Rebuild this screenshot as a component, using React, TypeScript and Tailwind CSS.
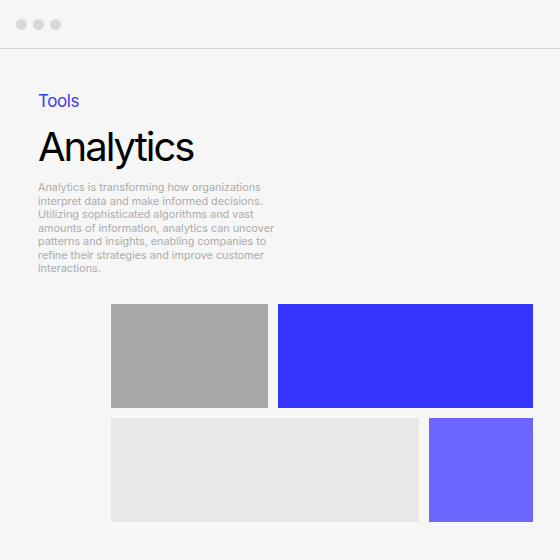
export default function App() {
  return (
    <div className="w-[560px] h-[560px] bg-[#f6f6f6] flex flex-col font-['Inter',sans-serif] overflow-hidden">
      {/* Window bar */}
      <div className="h-[49px] shrink-0 flex items-center gap-[6px] pl-4 border-b border-[#d6d6d6]">
        <span className="w-[11px] h-[11px] rounded-full bg-[#d9d9d9]" />
        <span className="w-[11px] h-[11px] rounded-full bg-[#d9d9d9]" />
        <span className="w-[11px] h-[11px] rounded-full bg-[#d9d9d9]" />
      </div>

      {/* Text */}
      <div className="pl-[38px] pt-[42px]">
        <p className="text-[17px] leading-[20px] tracking-[-0.4px] text-[#3a3ae6]">Tools</p>
        <h1 className="mt-[14px] text-[40px] leading-[44px] tracking-[-2px] text-black">Analytics</h1>
        <p className="mt-[12px] w-[242px] text-[10.8px] leading-[13.5px] text-[#ababab]">
          Analytics is transforming how organizations interpret data and make informed decisions.
          Utilizing sophisticated algorithms and vast amounts of information, analytics can uncover
          patterns and insights, enabling companies to refine their strategies and improve customer
          interactions.
        </p>
      </div>

      {/* Blocks */}
      <div className="mt-[28px] ml-[111px] w-[422px] flex flex-col gap-[10px]">
        <div className="h-[104px] flex gap-[10px]">
          <div className="w-[157px] bg-[#a8a8a8]" />
          <div className="flex-1 bg-[#3535ff]" />
        </div>
        <div className="h-[104px] flex gap-[10px]">
          <div className="flex-1 bg-[#e8e8e8]" />
          <div className="w-[104px] bg-[#6b66ff]" />
        </div>
      </div>
    </div>
  );
}
